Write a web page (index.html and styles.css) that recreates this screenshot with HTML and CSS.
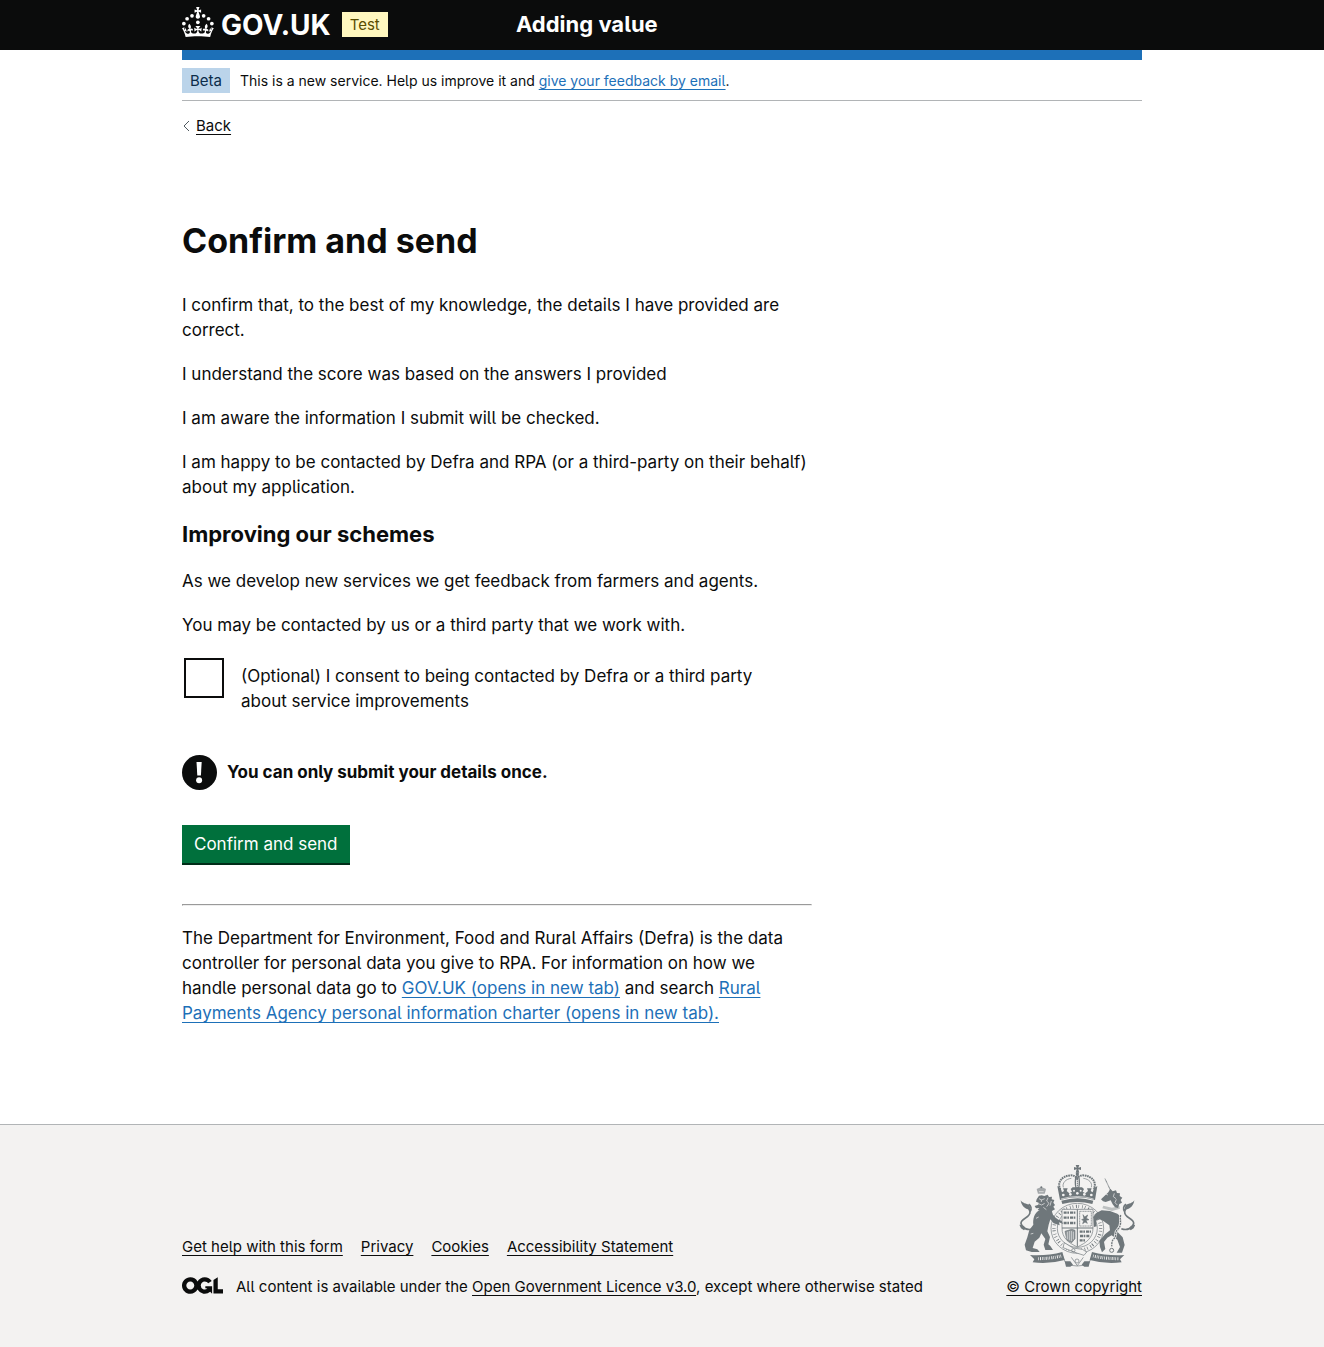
FILE: index.html
```html
<!DOCTYPE html>
<html lang="en">
<head>
<meta charset="utf-8">
<meta name="viewport" content="width=device-width, initial-scale=1">
<title>Confirm and send - Adding value - GOV.UK</title>
<link rel="stylesheet" href="styles.css">
</head>
<body>
<header class="header">
  <div class="container header-inner">
    <div class="header-logo">
      <a class="header-home" href="#">
        <svg class="crown" viewBox="0 0 64 60" width="32" height="30" fill="currentColor" aria-hidden="true">
          <circle cx="20" cy="17.6" r="3.7"/><circle cx="10.2" cy="23.5" r="3.7"/><circle cx="3.7" cy="33.2" r="3.7"/><circle cx="31.7" cy="30.6" r="3.7"/><circle cx="43.3" cy="17.6" r="3.7"/><circle cx="53.2" cy="23.5" r="3.7"/><circle cx="59.7" cy="33.2" r="3.7"/>
          <path d="M33.1,9.8c.2-.1.3-.3.5-.5l4.6,2.4v-6.8l-4.6,1.5c-.1-.2-.3-.3-.5-.5l1.9-5.9h-6.7l1.9,5.9c-.2.1-.3.3-.5.5l-4.6-1.5v6.8l4.6-2.4c.1.2.3.3.5.5l-2.6,8c-.9,2.8,1.2,5.7,4.1,5.7h0c3,0,5.1-2.9,4.1-5.7l-2.6-8ZM37,37.9s-3.4,3.8-4.1,6.1c2.2,0,4.2-.5,6.4-2.8l-.7,8.5c-2-2.8-4.4-4.1-5.7-3.8.1,3.1.5,6.7,5.8,7.2,3.7.3,6.7-1.5,7-3.8.4-2.6-2-4.3-3.7-1.6-1.4-4.5,2.4-6.1,4.9-3.2-1.9-4.5-1.8-7.7,2.4-10.9,3,4,2.6,7.3-1.2,11.1,2.4-1.3,6.2,0,4,4.6-1.2-2.8-3.7-2.2-4.2.2-.3,1.7.7,3.7,3,4.2,1.9.3,4.7-.9,7-5.9-1.3,0-2.4.7-3.9,1.7l2.4-8c.6,2.3,1.4,3.7,2.2,4.5.6-1.6.5-2.8,0-5.3l5,1.8c-2.6,3.6-5.2,8.7-7.3,17.5-7.4-1.1-15.7-1.7-24.5-1.7h0c-8.8,0-17.1.6-24.5,1.7-2.1-8.9-4.7-13.9-7.3-17.5l5-1.8c-.5,2.5-.6,3.7,0,5.3.8-.8,1.6-2.3,2.2-4.5l2.4,8c-1.5-1-2.6-1.7-3.9-1.7,2.3,5,5.2,6.2,7,5.9,2.3-.4,3.3-2.4,3-4.2-.5-2.4-3-3.1-4.2-.2-2.2-4.6,1.6-6,4-4.6-3.7-3.7-4.2-7.1-1.2-11.1,4.2,3.2,4.3,6.4,2.4,10.9,2.5-2.8,6.3-1.3,4.9,3.2-1.8-2.7-4.1-1-3.7,1.6.3,2.3,3.3,4.1,7,3.8,5.4-.5,5.7-4.2,5.8-7.2-1.3-.2-3.7,1-5.7,3.8l-.7-8.5c2.2,2.3,4.2,2.7,6.4,2.8-.7-2.3-4.1-6.1-4.1-6.1h10.6,0Z"/>
        </svg>
        <span class="wordmark">GOV.UK</span>
      </a>
      <strong class="tag tag-yellow">Test</strong>
    </div>
    <div class="header-content"><a class="service-name" href="#">Adding value</a></div>
  </div>
</header>

<div class="container">
  <div class="phase-banner">
    <strong class="tag tag-blue">Beta</strong>
    <span>This is a new service. Help us improve it and <a class="link" href="#">give your feedback by email</a>.</span>
  </div>
  <nav class="back">
    <svg class="back-arrow" viewBox="0 0 8 12" width="8" height="12" fill="none" stroke="#505a5f" aria-hidden="true"><path d="M7 1 2 6l5 5"/></svg>
    <a class="link link-plain" href="#">Back</a>
  </nav>

  <main class="main">
    <div class="column">
      <h1 class="heading-l">Confirm and send</h1>
      <form class="form" action="#" method="post">
        <p>I confirm that, to the best of my knowledge, the details I have provided are correct.</p>
        <p>I understand the score was based on the answers I provided</p>
        <p>I am aware the information I submit will be checked.</p>
        <p>I am happy to be contacted by Defra and RPA (or a third-party on their behalf) about my application.</p>
        <h2 class="heading-m">Improving our schemes</h2>
        <p>As we develop new services we get feedback from farmers and agents.</p>
        <p>You may be contacted by us or a third party that we work with.</p>
        <div class="checkbox">
          <input class="checkbox-input" type="checkbox" id="consent" name="consent">
          <label class="checkbox-label" for="consent">(Optional) I consent to being contacted by Defra or a third party about service improvements</label>
        </div>
        <div class="warning">
          <svg class="warning-icon" viewBox="0 0 35 35" width="35" height="35" aria-hidden="true"><circle cx="17.500" cy="17.500" r="17.500" fill="#0b0c0c"/><path d="M14.500 7h5.200l-.8 13.600h-3.600z" fill="#fff"/><circle cx="17.100" cy="25.200" r="3" fill="#fff"/></svg>
          <strong>You can only submit your details once.</strong>
        </div>
        <button class="button" type="submit">Confirm and send</button>
      </form>
      <hr class="rule">
      <p>The Department for Environment, Food and Rural Affairs (Defra) is the data controller for personal data you give to RPA. For information on how we handle personal data go to <a class="link" href="#">GOV.UK (opens in new tab)</a> and search <a class="link" href="#">Rural Payments Agency personal information charter (opens in new tab).</a></p>
    </div>
  </main>
</div>

<footer class="footer">
  <div class="container footer-inner">
    <div class="footer-meta">
      <ul class="footer-links">
        <li><a class="link link-plain" href="#">Get help with this form</a></li>
        <li><a class="link link-plain" href="#">Privacy</a></li>
        <li><a class="link link-plain" href="#">Cookies</a></li>
        <li><a class="link link-plain" href="#">Accessibility Statement</a></li>
      </ul>
      <div class="licence">
        <svg class="ogl" viewBox="0 0 483.2 195.7" width="41" height="17" fill="currentColor" aria-hidden="true"><path d="M421.5 142.8V.1l-50.7 32.3v161.1h112.4v-50.7zm-122.3-9.6A47.12 47.12 0 0 1 221 97.8c0-26 21.1-47.1 47.1-47.1 16.7 0 31.4 8.7 39.7 21.8l42.7-27.2A97.63 97.63 0 0 0 268.1 0c-36.5 0-68.3 20.1-85.1 49.7A98 98 0 0 0 97.8 0C43.9 0 0 43.9 0 97.9s43.9 97.8 97.8 97.8c36.5 0 68.3-20.1 85.1-49.7a97.76 97.76 0 0 0 149.6 25.4l19.4 22.2h3v-87.8h-80v24.3zM97.8 145c-26 0-47.1-21.1-47.1-47.1s21.1-47.1 47.1-47.1 47.1 21.1 47.1 47.1S123.8 145 97.8 145"/></svg>
        <span>All content is available under the <a class="link link-plain" href="#">Open Government Licence v3.0</a>, except where otherwise stated</span>
      </div>
    </div>
    <div class="copyright">
      <svg class="arms" viewBox="57 45 348 306" width="116" height="102" fill="none" stroke="#6f777b" stroke-width="3" aria-hidden="true">
        <!-- royal crown -->
        <g>
          <path d="M227 45h11l-3 8 8-2v9l-8-2 3 10h-11l3-10-8 2v-9l8 2z" fill="#6f777b" stroke="none"/>
          <circle cx="232" cy="72" r="5" fill="#6f777b" stroke="none"/>
          <path d="M181 118C170 97 186 77 213 76q12 0 18 10 6-10 18-10c27 1 43 21 32 42" stroke-width="6" stroke-dasharray="5 2"/>
          <path d="M190 112c-4-13 7-25 24-27M274 112c4-13-7-25-24-27" stroke-width="2"/>
          <ellipse cx="232" cy="97" rx="6" ry="20" stroke-width="4"/>
          <path d="M232 80v34" stroke-dasharray="4 2"/>
          <path d="M172 108l10 7 4 12 6-4-3-8h14l-3 8 8 7 8-5-4-8 6-5h28l6 5-4 8 8 5 8-7-3-8h14l-3 8 6 4 4-12 10-7-7 42q-53-17-105 0z" fill="#6f777b" stroke="none"/>
          <g fill="#f3f2f1" stroke="none"><circle cx="190" cy="135" r="4"/><circle cx="211" cy="133" r="4"/><circle cx="232" cy="130" r="4"/><circle cx="253" cy="133" r="4"/><circle cx="274" cy="135" r="4"/><circle cx="222" cy="122" r="3"/><circle cx="242" cy="122" r="3"/></g>
          <path d="M183 147q50-15 98 0" stroke="#f3f2f1" stroke-width="2"/>
          <path d="M184 152q50-15 96 0l-3 10q-46-12-90 0z" fill="#6f777b" stroke="none"/>
        </g>
        <!-- garter -->
        <ellipse cx="232" cy="235" rx="79" ry="75" stroke-width="2"/>
        <ellipse cx="232" cy="235" rx="60" ry="57" stroke-width="2"/>
        <ellipse cx="232" cy="235" rx="70" ry="66" stroke-width="10" stroke-dasharray="2 6 2 8 3 5 2 9"/>
        <!-- quartered shield -->
        <path d="M186 178h93v56c0 30-20 44-47 57-27-13-46-27-46-57z" fill="#f3f2f1" stroke-width="2"/>
        <path d="M232 178v112M186 234h93" stroke-width="3"/>
        <g stroke-width="7" stroke-dasharray="9 2 5 3"><path d="M191 188h36M191 203h36M191 219h36M239 245h34M240 258h28M239 271h18"/></g>
        <rect x="239" y="184" width="35" height="44" stroke-width="2" stroke-dasharray="4 1"/>
        <path d="M249 194l5 7 9-6-4 10 8 4-9 2 4 9-7-4-7 5 3-9-6-3 7-3z" fill="#6f777b" stroke-width="2"/>
        <path d="M195 244l20-6 10 3v25l-10 12-14-7z" fill="#8b9194" stroke-width="2"/>
        <path d="M202 245v23M208 243v28M214 243v30M220 245v23" stroke="#f3f2f1" stroke-width="2"/>
        <!-- lion -->
        <g fill="#6f777b" stroke="none">
          <path d="M110 148l7-11 8-1 8 2 10-4 4 7 9-1-1 8 8 2-3 8 5 7-5 5 5 8-8 4-4 8-14-2-12 2-8-7-6-4 5-5-10 1-4-7 11-4 1-6-8-3z"/>
          <path d="M116 182c-13 8-18 24-16 42l-12 16-6 22-8 22 4 17 17 5h24l-7-8-14-4 6-19 14-12 6-13 12 17-5 17 5 16h23l-8-12-6-5 5-22-8-17 4-20 5-16 10 12 18 6-2-9 12 5-4-10-14-4-12-14-4-12z"/>
          <path d="M110 118l5-3 9-4 9 4 5 3-4 13h-20z" opacity=".6"/>
          <circle cx="124" cy="112" r="3"/>
        </g>
        <path d="M117 125h14" stroke="#f3f2f1" stroke-width="2"/>
        <path d="M100 236c-18 7-34-2-37-16-1-15 29-16 27-35-2-14-12-13-16-20m16 20c6-8 3-18-4-22" stroke-width="5"/>
        <path d="M62 151c5 9 16 9 27 15l2 14-10-3c-9-3-17-12-19-26zM58 224l13 3 6 8-5 6-9-6z" fill="#6f777b" stroke="none"/>
        <path d="M117 146l8 4 9-4M124 149v7M115 161l10 4 9-5M144 143l-4 10 7 7-7 10M154 153l-4 14M130 172l9 7M108 205l8-4M92 252l8-2" stroke="#f3f2f1" stroke-width="2"/>
        <!-- unicorn -->
        <path d="M315 86l16 34" stroke-width="3" stroke-dasharray="3 1"/>
        <g fill="#6f777b" stroke="none">
          <path d="M303 148l22-21 6-11 7 8 10-3 3 8 9 1-1 8 8 5-5 7 4 8-8 4-4 12-9-2-7-9-6-12-15 5-8-2z"/>
          <path d="M310 167l26 6 22-5 2 8-24 7-29-8z" opacity=".4"/>
          <path d="M290 188l15-7 25 2 22 8c14 9 16 25 8 43l-8 11 16 17 6 23-8 23h-16l10-17-8-22-17-13-13 7-10 13 4 21-10 10-6-16-2-18 17-20 15-12-2-15-18-13-14-7-8 7 2 16-8 2-2-30z"/>
        </g>
        <path d="M364 236c18 7 34-2 37-16 1-15-29-16-27-35 2-14 12-13 16-20m-16 20c-6-8-3-18 4-22" stroke-width="5"/>
        <path d="M403 151c-5 9-16 9-27 15l-2 14 10-3c9-3 17-12 19-26zM406 224l-13 3-6 8 5 6 9-6z" fill="#6f777b" stroke="none"/>
        <path d="M317 132l7 3M343 130l-3 10 8 6M349 148l-4 10 7 7" stroke="#f3f2f1" stroke-width="2"/>
        <path d="M362 195c-4 20 5 30-9 43-10 8-2 21-12 29-7 7-5 14-6 22" stroke="#f3f2f1" stroke-width="8"/>
        <path d="M362 195c-4 20 5 30-9 43-10 8-2 21-12 29-7 7-5 14-6 22" stroke-width="4" stroke-dasharray="6 2"/>
        <circle cx="335" cy="301" r="6" fill="#f3f2f1" stroke-width="3"/>
        <!-- belt and compartment -->
        <path d="M193 278l26 16 28 4 13 8-8 10-19-6-44-17z" fill="#f3f2f1" stroke-width="2"/>
        <circle cx="220" cy="301" r="5" stroke-width="2"/>
        <path d="M184 310l14 31q33 14 68 0l14-31" stroke-width="2"/>
        <path d="M194 334h17l8 10-8 6h-13zM270 334h-17l-8 10 8 6h13z" fill="#6f777b" stroke="none"/>
        <path d="M214 322l18 25 18-25" stroke-width="2"/>
        <circle cx="231" cy="333" r="6" stroke-width="2"/>
        <!-- motto ribbon -->
        <path d="M90 315q52 3 97-9l7 24q-46 13-96 7l5-9zM373 315q-52 3-97-9l-7 24q46 13 96 7l-5-9z" fill="#6f777b" stroke="none"/>
        <path d="M114 326q36 0 70-8M279 318q34 8 76 8" stroke="#f3f2f1" stroke-width="9" stroke-dasharray="2 4 3 3 2 3"/>
      </svg>
      <a class="link link-plain" href="#">© Crown copyright</a>
    </div>
  </div>
</footer>
</body>
</html>
```
FILE: styles.css
```css
* {
  box-sizing: border-box;
}

body {
  margin: 0;
  background: #fff;
  color: #0b0c0c;
  font-family: Inter, "Liberation Sans", sans-serif;
  font-size: 17px;
  line-height: 25px;
  font-feature-settings: "cv05";
}

.container {
  max-width: 960px;
  margin: 0 auto;
}

.header {
  height: 50px;
  background: #0b0c0c;
  color: #fff;
}

.header-inner {
  display: flex;
  align-items: center;
  height: 60px;
  border-bottom: 10px solid #1d70b8;
}

.header-logo {
  display: flex;
  align-items: center;
  gap: 11px;
  flex: 0 0 33.33%;
}

.header-home {
  display: flex;
  align-items: center;
  gap: 7px;
  color: inherit;
  text-decoration: none;
}

.crown {
  margin-bottom: 6px;
}

.wordmark {
  font-size: 28px;
  font-weight: 700;
  line-height: 30px;
}

.header-content {
  padding-left: 14px;
}

.service-name {
  color: inherit;
  font-size: 22px;
  font-weight: 700;
  text-decoration: none;
}

.tag {
  padding: 0 8px;
  font-size: 15px;
  font-weight: 400;
  line-height: 25px;
}

.tag-yellow {
  margin-bottom: 2px;
  background: #fff7bf;
  color: #594d00;
}

.tag-blue {
  background: #bbd4ea;
  color: #0c2d4a;
}

.link {
  color: #1d70b8;
  text-decoration: underline;
  text-decoration-thickness: 1px;
  text-decoration-skip-ink: none;
  text-underline-offset: 3px;
}

.link-plain {
  color: inherit;
}

.phase-banner {
  display: flex;
  align-items: center;
  gap: 10px;
  padding: 18px 0 7px;
  border-bottom: 1px solid #b1b4b6;
  font-size: 14px;
}

.back {
  display: flex;
  align-items: center;
  gap: 6px;
  padding-top: 15px;
  font-size: 15px;
  line-height: 20px;
}

.main {
  padding: 85px 0 98px;
}

.column {
  max-width: 630px;
}

.heading-l {
  margin: 0 0 32px;
  font-size: 34px;
  font-weight: 700;
  line-height: 40px;
}

.heading-m {
  margin: 0 0 20px;
  font-size: 22px;
  font-weight: 700;
  line-height: 30px;
}

.column p {
  margin: 0 0 19px;
}

.column > p {
  margin: 0;
}

.checkbox {
  display: flex;
  gap: 17px;
  padding: 1px 32px 0 2px;
}

.checkbox-input {
  flex: none;
  appearance: none;
  width: 40px;
  height: 40px;
  margin: 0;
  border: 2px solid #0b0c0c;
  background: #fff;
}

.checkbox-label {
  padding-top: 6px;
}

.warning {
  display: flex;
  align-items: center;
  gap: 10px;
  margin: 41px 0 35px;
}

.button {
  display: block;
  height: 38px;
  padding: 0 12px;
  border: 0;
  background: #00703c;
  box-shadow: 0 2px 0 #002d18;
  color: #fff;
  font: inherit;
  font-feature-settings: inherit;
}

.rule {
  margin: 41px 0 20px;
  border: 1px solid;
  border-color: #9a9a9a #eee #eee #9a9a9a;
}

.footer {
  border-top: 1px solid #b1b4b6;
  background: #f3f2f1;
  font-size: 15px;
  line-height: 20px;
}

.footer-inner {
  display: flex;
  align-items: flex-end;
  justify-content: space-between;
  padding: 40px 0 50px;
}

.footer-meta {
  display: grid;
  gap: 20px;
}

.footer-links {
  display: flex;
  gap: 18px;
  margin: 0;
  padding: 0;
  list-style: none;
}

.licence {
  display: flex;
  align-items: center;
  gap: 13px;
}

.ogl {
  margin-bottom: 3px;
}

.copyright {
  display: flex;
  flex-direction: column;
  align-items: flex-end;
  gap: 10px;
}

.arms {
  margin-right: 7px;
}
```
